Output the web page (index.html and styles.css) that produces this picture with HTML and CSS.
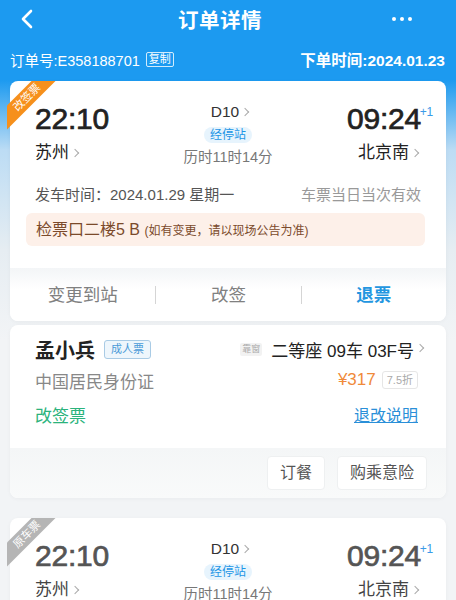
FILE: index.html
```html
<!DOCTYPE html>
<html lang="zh-CN">
<head>
    <meta charset="UTF-8">
    <meta name="viewport" content="width=device-width, initial-scale=1.0">
    <title>订单详情</title>
    <link rel="stylesheet" href="styles.css">
</head>
<body>
    <header class="nav">
        <span class="back">
            <svg width="14" height="20" viewBox="0 0 14 20"><path d="M11 2 L3 10 L11 18" fill="none" stroke="#fff" stroke-width="2.6" stroke-linecap="round" stroke-linejoin="round"/></svg>
        </span>
        <h1>订单详情</h1>
        <span class="more"><i></i><i></i><i></i></span>
    </header>

    <div class="order-meta">
        <div class="order-no">订单号:E358188701 <span class="copy">复制</span></div>
        <div class="order-time">下单时间:2024.01.23</div>
    </div>

    <!-- current ticket -->
    <section class="card trip">
        <div class="ribbon"><span>改签票</span></div>
        <div class="trip-main">
            <div class="station">
                <div class="time">22:10</div>
                <div class="city">苏州<i class="chev"></i></div>
            </div>
            <div class="train">
                <div class="train-no">D10<i class="chev"></i></div>
                <span class="stops">经停站</span>
                <div class="duration">历时11时14分</div>
            </div>
            <div class="station to">
                <div class="time">09:24<sup>+1</sup></div>
                <div class="city">北京南<i class="chev"></i></div>
            </div>
        </div>
        <div class="depart-row">
            <span>发车时间：2024.01.29 星期一</span>
            <span class="valid">车票当日当次有效</span>
        </div>
        <div class="notice">检票口二楼5 B <small>(如有变更，请以现场公告为准)</small></div>
        <div class="actions">
            <span>变更到站</span>
            <span>改签</span>
            <span class="primary">退票</span>
        </div>
    </section>

    <!-- passenger -->
    <section class="card passenger">
        <div class="p-body">
            <div class="p-row">
                <div class="p-name">孟小兵 <span class="tag-adult">成人票</span></div>
                <div class="seat"><span class="tag-window">靠窗</span>二等座 09车 03F号<i class="chev"></i></div>
            </div>
            <div class="p-row">
                <div class="p-id">中国居民身份证</div>
                <div class="price">¥317 <span class="tag-discount">7.5折</span></div>
            </div>
            <div class="p-row">
                <div class="p-status">改签票</div>
                <a class="rules">退改说明</a>
            </div>
        </div>
        <div class="p-foot">
            <span class="btn">订餐</span>
            <span class="btn">购乘意险</span>
        </div>
    </section>

    <!-- original ticket -->
    <section class="card trip old">
        <div class="ribbon"><span>原车票</span></div>
        <div class="trip-main">
            <div class="station">
                <div class="time">22:10</div>
                <div class="city">苏州<i class="chev"></i></div>
            </div>
            <div class="train">
                <div class="train-no">D10<i class="chev"></i></div>
                <span class="stops">经停站</span>
                <div class="duration">历时11时14分</div>
            </div>
            <div class="station to">
                <div class="time">09:24<sup>+1</sup></div>
                <div class="city">北京南<i class="chev"></i></div>
            </div>
        </div>
        <div class="depart-row">
            <span>发车时间：2024.01.29 星期一</span>
            <span class="valid">车票当日当次有效</span>
        </div>
    </section>
</body>
</html>
```

FILE: styles.css
```css
body {
    margin: 0;
    min-height: 600px;
    font-family: "Liberation Sans", "Noto Sans CJK SC", sans-serif;
    color: #222;
    background: linear-gradient(#1c9af0 0, #1c9af0 80px, #bcdcf4 150px, #e6edf2 250px, #f2f4f6 340px, #f2f4f6 100%);
}

/* top bar */
.nav {
    height: 38px;
    display: flex;
    align-items: center;
    justify-content: space-between;
    padding: 0 44px 0 20px;
    color: #fff;
}

.nav h1 {
    margin: 0 0 0 14px;
    font-size: 20.5px;
    font-weight: 700;
    letter-spacing: 0.5px;
}

.back {
    display: flex;
}

.more {
    display: flex;
    gap: 4px;
}

.more i {
    width: 4px;
    height: 4px;
    border-radius: 50%;
    background: #fff;
}

.order-meta {
    display: flex;
    justify-content: space-between;
    align-items: center;
    padding: 9px 11px 0 10px;
    height: 24px;
    color: #fff;
}

.order-no {
    font-size: 14.5px;
    display: flex;
    align-items: center;
    gap: 6px;
}

.copy {
    font-size: 11px;
    line-height: 13px;
    padding: 0 2px;
    border: 1px solid rgba(255, 255, 255, 0.8);
    border-radius: 2px;
}

.order-time {
    font-size: 15.5px;
    font-weight: 700;
}

/* cards */
.card {
    position: relative;
    margin: 10px 10px 0;
    background: #fff;
    border-radius: 8px;
    box-shadow: 0 1px 4px rgba(0, 0, 0, 0.04);
}

.ribbon {
    position: absolute;
    top: 0;
    left: -3px;
    width: 62px;
    height: 62px;
    overflow: hidden;
}

.ribbon span {
    position: absolute;
    left: -21px;
    top: 8px;
    width: 82px;
    height: 17px;
    line-height: 17px;
    transform: rotate(-45deg);
    background: #f6901c;
    color: #fff;
    font-size: 11px;
    text-align: center;
}

.old .ribbon span {
    background: #b5b5b5;
}

.trip-main {
    display: flex;
    justify-content: space-between;
    align-items: flex-start;
    padding: 21px 25px 0;
}

.station .time {
    position: relative;
    font-size: 30px;
    line-height: 34px;
    font-weight: 400;
    -webkit-text-stroke: 0.7px currentColor;
    letter-spacing: -0.2px;
}

.station .time sup {
    position: absolute;
    top: -7px;
    right: -12px;
    font-size: 12px;
    font-weight: 400;
    -webkit-text-stroke: 0;
    color: #3a9be8;
}

.station .city {
    margin-top: 5px;
    font-size: 17px;
    line-height: 24px;
}

.station.to {
    text-align: right;
}

.chev {
    display: inline-block;
    width: 5px;
    height: 5px;
    margin: 0 3px 2px 3px;
    border-top: 1.2px solid #aaa;
    border-right: 1.2px solid #aaa;
    transform: rotate(45deg);
    vertical-align: middle;
}

.train {
    display: flex;
    flex-direction: column;
    align-items: center;
}

.train-no {
    font-size: 15.5px;
    line-height: 20px;
    color: #333;
    padding-left: 6px;
}

.stops {
    margin-top: 5px;
    padding: 0 6px;
    font-size: 12px;
    line-height: 16px;
    color: #1e96e6;
    background: #e7f4fd;
    border-radius: 8px;
}

.duration {
    margin-top: 4px;
    font-size: 14.5px;
    line-height: 20px;
    color: #777;
}

.depart-row {
    display: flex;
    justify-content: space-between;
    padding: 17px 25px 0;
    font-size: 15px;
    line-height: 22px;
    color: #555;
}

.depart-row .valid {
    color: #999;
}

.notice {
    margin: 7px 21px 0 16px;
    padding: 0 10px;
    height: 33px;
    line-height: 33px;
    border-radius: 6px;
    background: #fdf0e9;
    color: #7b4a2b;
    font-size: 16px;
}

.notice small {
    font-size: 12px;
}

.actions {
    margin-top: 22px;
    display: grid;
    grid-template-columns: 1fr 1fr 1fr;
    align-items: center;
    height: 53px;
    border-radius: 0 0 8px 8px;
    background: linear-gradient(#f3f5f7, #fff 40%);
}

.actions span {
    text-align: center;
    font-size: 17.5px;
    color: #808080;
    border-left: 1px solid #d5d5d5;
    line-height: 18px;
}

.actions span:first-child {
    border-left: 0;
}

.actions .primary {
    color: #2396e0;
    font-weight: 700;
}

/* passenger card */
.card.passenger {
    margin-top: 4px;
}

.p-body {
    padding: 9px 28px 19px 25px;
}

.p-row {
    display: flex;
    justify-content: space-between;
    align-items: center;
    height: 30px;
}

.p-row:nth-child(2) {
    margin-top: 1px;
}

.p-row:nth-child(3) {
    margin-top: 4px;
}

.p-name {
    display: flex;
    align-items: center;
    gap: 9px;
    font-size: 20px;
    font-weight: 700;
}

.tag-adult {
    font-size: 11px;
    font-weight: 400;
    line-height: 17px;
    padding: 0 6px;
    color: #4a9ad8;
    background: #eef6fc;
    border: 1px solid #a9cbe5;
    border-radius: 3px;
}

.seat {
    display: flex;
    align-items: center;
    font-size: 17px;
    margin-right: -8px;
}

.tag-window {
    font-size: 9px;
    line-height: 13px;
    padding: 0 2px;
    margin-right: 9px;
    color: #aaa;
    background: #f2f2f2;
    border-radius: 2px;
}

.p-id {
    font-size: 17px;
    color: #888;
}

.price {
    display: flex;
    align-items: center;
    gap: 6px;
    font-size: 17px;
    color: #f08a3a;
}

.tag-discount {
    font-size: 11px;
    line-height: 16px;
    padding: 0 4px;
    color: #aaa;
    border: 1px solid #e6e6e6;
    border-radius: 3px;
}

.p-status {
    font-size: 17px;
    color: #2bb37c;
}

.rules {
    font-size: 16px;
    color: #2a8fd8;
    text-decoration: underline;
}

.p-foot {
    display: flex;
    justify-content: flex-end;
    align-items: center;
    gap: 12px;
    height: 50px;
    padding-right: 19px;
    border-radius: 0 0 8px 8px;
    background: linear-gradient(#f4f6f7, #f9fafa);
}

.btn {
    padding: 0 12px;
    height: 32px;
    line-height: 32px;
    font-size: 16px;
    color: #555;
    background: #fff;
    border: 1px solid #eef0f1;
    border-radius: 4px;
}

/* original ticket */
.card.old {
    margin-top: 20px;
    padding-bottom: 20px;
}

.old .station .time {
    color: #555;
}

.old .station .city {
    color: #444;
}
```
